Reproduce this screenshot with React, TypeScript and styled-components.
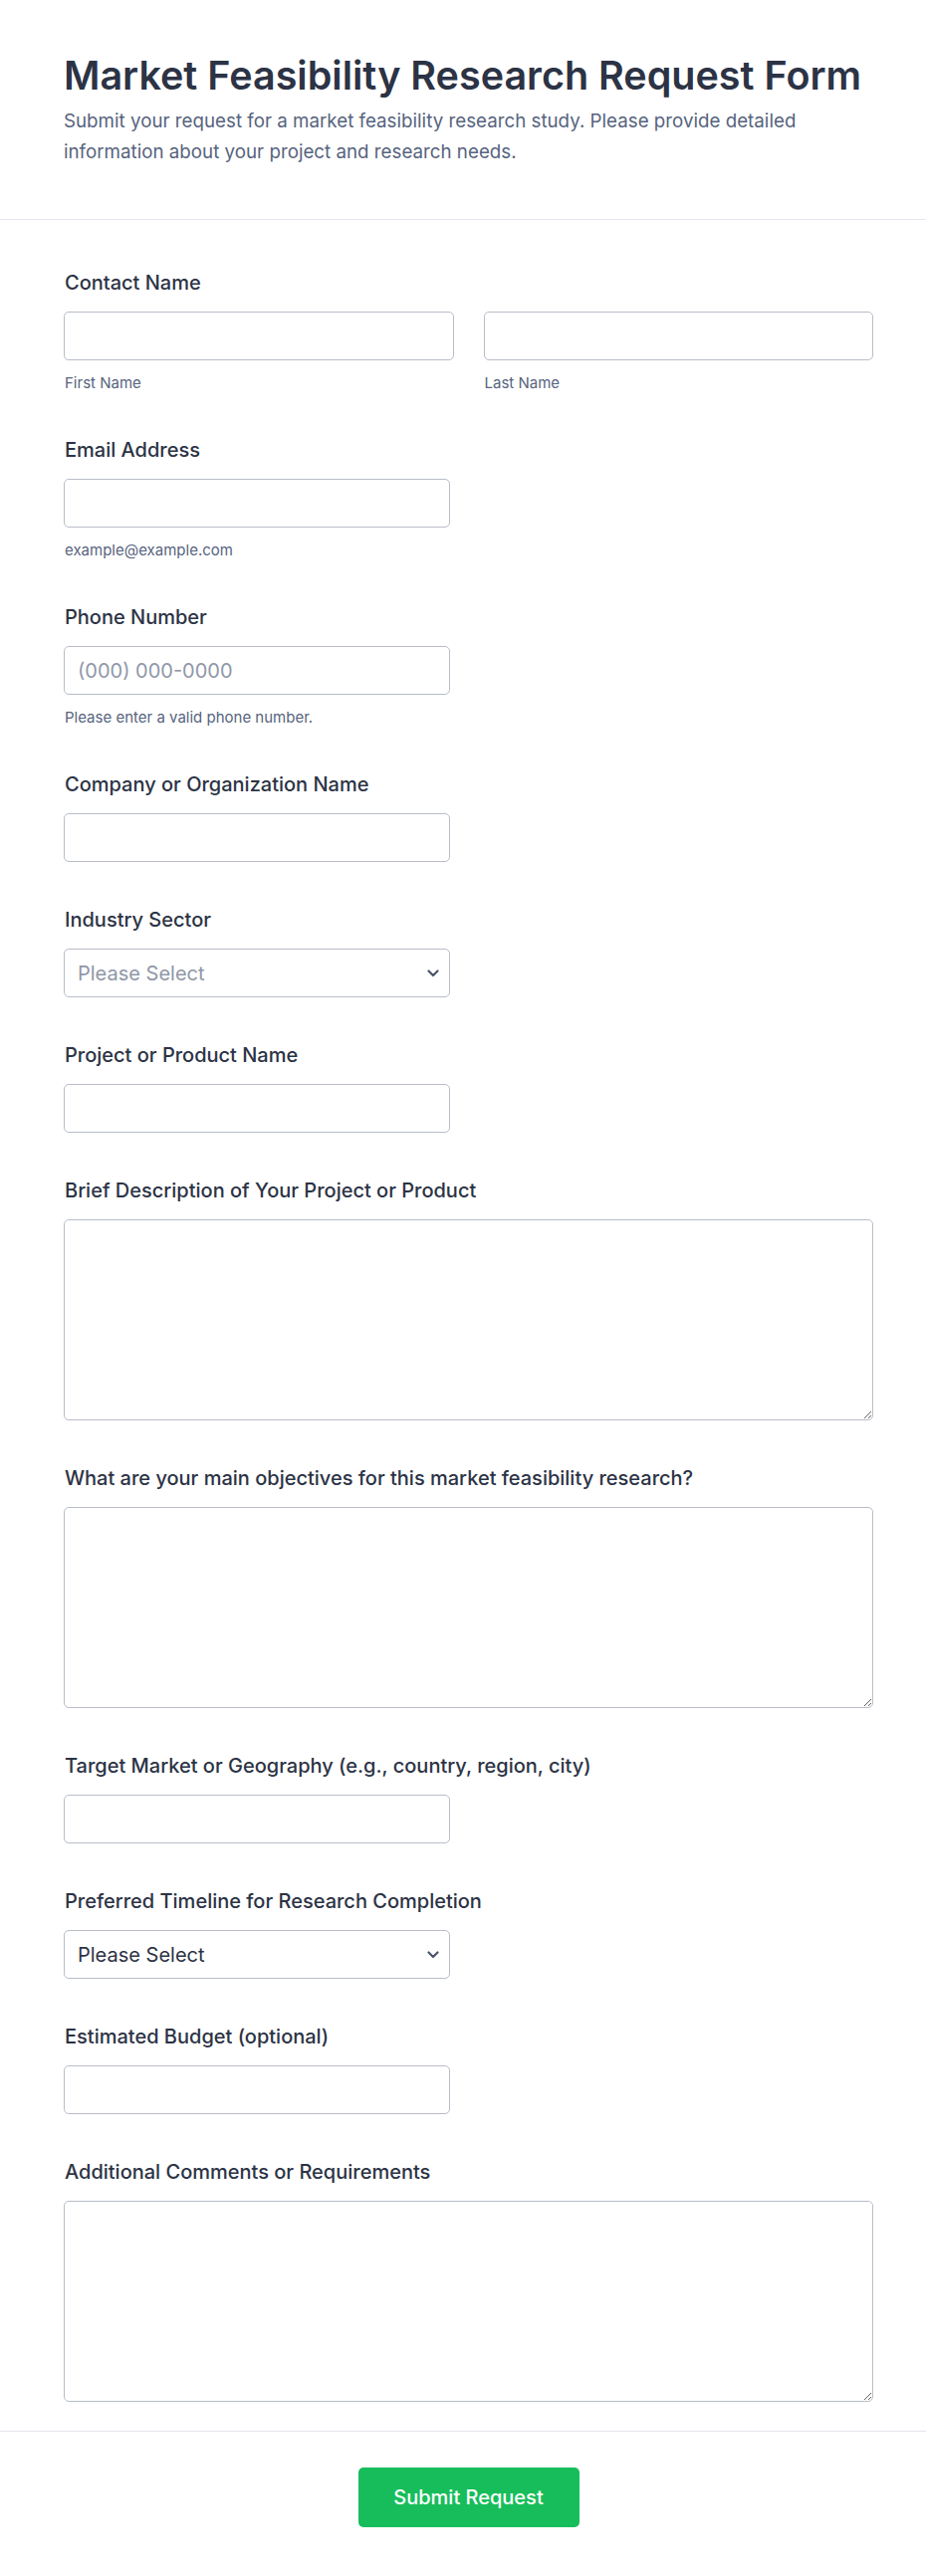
import React from 'react';
import styled, { createGlobalStyle } from 'styled-components';

const GlobalStyle = createGlobalStyle`
  * {
    box-sizing: border-box;
  }
  body {
    margin: 0;
    background: #ffffff;
    font-family: Inter, "Noto Sans", "Liberation Sans", sans-serif;
    color: #2c3345;
  }
`;

const Chevron = () => (
  <ChevronIcon width="12" height="8" viewBox="0 0 12 8" fill="none">
    <path d="M1.5 1.5L6 6L10.5 1.5" stroke="#4b556a" strokeWidth="2.2" strokeLinecap="round" strokeLinejoin="round" />
  </ChevronIcon>
);

const SelectField = ({ placeholder }: { placeholder?: boolean }) => (
  <SelectWrap>
    <Select defaultValue="" $placeholder={placeholder}>
      <option value="">Please Select</option>
    </Select>
    <Chevron />
  </SelectWrap>
);

export default function App() {
  return (
    <Page>
      <GlobalStyle />
      <Header>
        <Title>Market Feasibility Research Request Form</Title>
        <Subtitle>
          Submit your request for a market feasibility research study. Please provide detailed information about your
          project and research needs.
        </Subtitle>
      </Header>

      <Body>
        <Field>
          <Label>Contact Name</Label>
          <NameRow>
            <div>
              <Input />
              <SubLabel>First Name</SubLabel>
            </div>
            <div>
              <Input />
              <SubLabel>Last Name</SubLabel>
            </div>
          </NameRow>
        </Field>

        <Field>
          <Label>Email Address</Label>
          <Input $short type="email" />
          <SubLabel>example@example.com</SubLabel>
        </Field>

        <Field>
          <Label>Phone Number</Label>
          <Input $short placeholder="(000) 000-0000" />
          <SubLabel>Please enter a valid phone number.</SubLabel>
        </Field>

        <Field>
          <Label>Company or Organization Name</Label>
          <Input $short />
        </Field>

        <Field>
          <Label>Industry Sector</Label>
          <SelectField placeholder />
        </Field>

        <Field>
          <Label>Project or Product Name</Label>
          <Input $short />
        </Field>

        <Field>
          <Label>Brief Description of Your Project or Product</Label>
          <TextArea />
        </Field>

        <Field>
          <Label>What are your main objectives for this market feasibility research?</Label>
          <TextArea />
        </Field>

        <Field>
          <Label>Target Market or Geography (e.g., country, region, city)</Label>
          <Input $short />
        </Field>

        <Field>
          <Label>Preferred Timeline for Research Completion</Label>
          <SelectField />
        </Field>

        <Field>
          <Label>Estimated Budget (optional)</Label>
          <Input $short />
        </Field>

        <Field $last>
          <Label>Additional Comments or Requirements</Label>
          <TextArea />
        </Field>
      </Body>

      <Footer>
        <SubmitButton type="button">Submit Request</SubmitButton>
      </Footer>
    </Page>
  );
}

const Page = styled.div`
  width: 930px;
  background: #ffffff;
`;

const Header = styled.header`
  padding: 54px 53px 52px 64px;
  border-bottom: 1px solid #e3e6ec;
`;

const Title = styled.h1`
  margin: 0;
  font-size: 39.5px;
  line-height: 44px;
  font-weight: 600;
  color: #2c3345;
`;

const Subtitle = styled.p`
  margin: 8px 0 0;
  font-size: 18.75px;
  line-height: 31px;
  color: #57647e;
`;

const Body = styled.div`
  padding: 51px 53px 0 64px;
`;

const Field = styled.div<{ $last?: boolean }>`
  padding-bottom: ${(p) => (p.$last ? '29px' : '46px')};
`;

const Label = styled.label`
  display: block;
  margin-bottom: 17px;
  padding-left: 1px;
  font-size: 20px;
  line-height: 24px;
  font-weight: 500;
  color: #2c3345;
`;

const NameRow = styled.div`
  display: grid;
  grid-template-columns: 1fr 1fr;
  column-gap: 30px;
`;

const Input = styled.input<{ $short?: boolean }>`
  display: block;
  width: ${(p) => (p.$short ? '388px' : '100%')};
  height: 49px;
  padding: 0 13px;
  border: 1px solid #b8bdc9;
  border-radius: 5px;
  background: #ffffff;
  font-family: inherit;
  font-size: 20px;
  color: #2c3345;
  outline: none;

  &::placeholder {
    color: #8f97a8;
  }
`;

const SubLabel = styled.div`
  margin-top: 14px;
  padding-left: 1px;
  font-size: 15px;
  line-height: 18px;
  color: #57647e;
`;

const TextArea = styled.textarea`
  display: block;
  width: 100%;
  height: 202px;
  padding: 12px 13px;
  border: 1px solid #b8bdc9;
  border-radius: 5px;
  font-family: inherit;
  font-size: 20px;
  color: #2c3345;
  resize: vertical;
  outline: none;
`;

const SelectWrap = styled.div`
  position: relative;
  width: 388px;
`;

const Select = styled.select<{ $placeholder?: boolean }>`
  display: block;
  width: 100%;
  height: 49px;
  padding: 0 40px 0 13px;
  border: 1px solid #b8bdc9;
  border-radius: 5px;
  background: #ffffff;
  appearance: none;
  font-family: inherit;
  font-size: 20px;
  color: ${(p) => (p.$placeholder ? '#8f97a8' : '#2c3345')};
  outline: none;
`;

const ChevronIcon = styled.svg`
  position: absolute;
  right: 11px;
  top: 50%;
  transform: translateY(-50%);
  pointer-events: none;
`;

const Footer = styled.footer`
  display: flex;
  justify-content: center;
  padding: 36px 53px 49px 64px;
  border-top: 1px solid #e3e6ec;
`;

const SubmitButton = styled.button`
  width: 222px;
  height: 60px;
  border: none;
  border-radius: 5px;
  background: #18bd5b;
  color: #ffffff;
  font-family: inherit;
  font-size: 20px;
  font-weight: 500;
  cursor: pointer;
`;
